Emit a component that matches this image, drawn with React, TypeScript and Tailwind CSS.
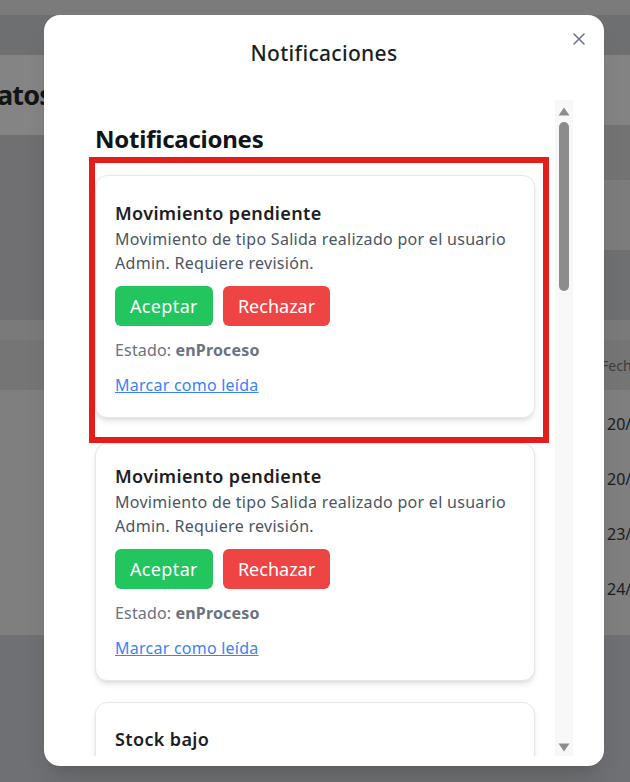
import React from "react";

type Notif = {
  title: string;
  body?: string;
  estado?: string;
  actions?: boolean;
  pad: string;
  gap: string;
};

const notifs: Notif[] = [
  {
    title: "Movimiento pendiente",
    body: "Movimiento de tipo Salida realizado por el usuario Admin. Requiere revisión.",
    estado: "enProceso",
    actions: true,
    pad: "pt-[23px]",
    gap: "",
  },
  {
    title: "Movimiento pendiente",
    body: "Movimiento de tipo Salida realizado por el usuario Admin. Requiere revisión.",
    estado: "enProceso",
    actions: true,
    pad: "pt-[18px]",
    gap: "mt-[25px]",
  },
  {
    title: "Stock bajo",
    body: "El producto tiene stock por debajo del mínimo.",
    pad: "pt-[22px]",
    gap: "mt-[21px]",
  },
];

function NotifCard({ n }: { n: Notif }) {
  return (
    <div className={`rounded-xl border border-[#e5e7eb] bg-white px-[19px] pb-5 shadow-md ${n.pad} ${n.gap}`}>
      <p className="text-lg leading-7 font-semibold tracking-[0.02em] text-[#1c2025]">{n.title}</p>
      <p className="text-base leading-6 tracking-[0.018em] text-[#4b5563]">{n.body}</p>
      {n.actions && (
        <div className="mt-[11px] flex gap-2.5">
          <button className="rounded-md bg-[#22c55e] px-[15px] py-1.5 text-lg leading-7 tracking-[0.02em] text-white">
            Aceptar
          </button>
          <button className="rounded-md bg-[#ef4444] px-[15px] py-1.5 text-lg leading-7 text-white">Rechazar</button>
        </div>
      )}
      {n.estado && (
        <p className="mt-3 text-base leading-6 tracking-[0.01em] text-[#6b7280]">
          Estado: <span className="font-bold">{n.estado}</span>
        </p>
      )}
      <a className="mt-[11px] block text-base leading-6 tracking-[0.015em] text-[#3b82f6] underline">
        Marcar como leída
      </a>
    </div>
  );
}

function Arrow({ down }: { down?: boolean }) {
  return (
    <svg width="12" height="9" viewBox="0 0 12 9" className={down ? "rotate-180" : ""}>
      <path d="M6 0.5 L11.5 8.5 L0.5 8.5 Z" fill="#8d8d8d" />
    </svg>
  );
}

function Backdrop() {
  const dates = ["20/", "20/", "23/", "24/"];
  return (
    <div className="flex h-full flex-col">
      <div className="h-[15px] bg-[#7b7b7c]" />
      <div className="h-[40px] bg-[#6e6f71]" />
      <div className="flex h-[265px]">
        <div className="flex w-[315px] flex-col">
          <div className="flex h-[80px] items-center bg-[#848484]">
            <span className="-ml-[3px] text-[27px] font-bold tracking-[-0.03em] text-[#131416]">atos</span>
          </div>
          <div className="flex-1 bg-[#707073]" />
        </div>
        <div className="flex flex-1 flex-col">
          <div className="h-[70px] bg-[#838383]" />
          <div className="h-[55px] bg-[#737374]" />
          <div className="h-[70px] bg-[#7c7c7c]" />
          <div className="flex-1 bg-[#6f7072]" />
        </div>
      </div>
      <div className="h-[20px] bg-[#7a7a7a]" />
      <div className="flex h-[50px] items-center bg-[#757576] pl-[601px]">
        <span className="whitespace-nowrap text-[14px] text-[#3c3d3f]">Fecha</span>
      </div>
      <div className="flex h-[245px] flex-col items-end bg-[#7f7f7f] pt-[6px]">
        {dates.map((d, i) => (
          <div key={i} className="flex h-[55px] w-[23px] items-center text-base text-[#1c1c1c]">
            {d}
          </div>
        ))}
      </div>
      <div className="flex-1 bg-[#6f7073]" />
    </div>
  );
}

export default function App() {
  return (
    <div className="relative h-[782px] w-[630px] overflow-hidden font-['Noto_Sans',sans-serif]">
      <Backdrop />

      <div className="absolute left-[44px] top-[15px] flex h-[751px] w-[560px] flex-col rounded-2xl bg-white shadow-xl">
        <div className="relative pt-[24px] text-center text-[21px] leading-7 font-medium tracking-[0.015em] text-[#1b1f23]">
          Notificaciones
          <button className="absolute right-[19px] top-[18px] text-[#6b7280]">
            <svg width="12" height="12" viewBox="0 0 12 12">
              <path d="M1 1 L11 11 M11 1 L1 11" stroke="currentColor" strokeWidth="1.5" strokeLinecap="round" />
            </svg>
          </button>
        </div>

        <div className="mx-[31px] mb-[10px] mt-[33px] flex min-h-0 flex-1">
          <div className="relative min-w-0 flex-1 overflow-hidden px-5 pt-[23px]">
            <h2 className="mb-5 text-2xl leading-8 font-bold tracking-[-0.01em] text-[#111418]">Notificaciones</h2>
            {notifs.map((n, i) => (
              <NotifCard key={i} n={n} />
            ))}
            <div className="absolute left-[14px] top-[57px] h-[286px] w-[460px] border-[6px] border-[#e41c1c]" />
          </div>
          <div className="flex w-[18px] flex-col items-center bg-[#f8f8f8] pb-[4px] pt-[7px]">
            <Arrow />
            <div className="mt-[6px] h-[169px] w-[10px] rounded-full bg-[#8c8c8c]" />
            <div className="flex-1" />
            <Arrow down />
          </div>
        </div>
      </div>
    </div>
  );
}
